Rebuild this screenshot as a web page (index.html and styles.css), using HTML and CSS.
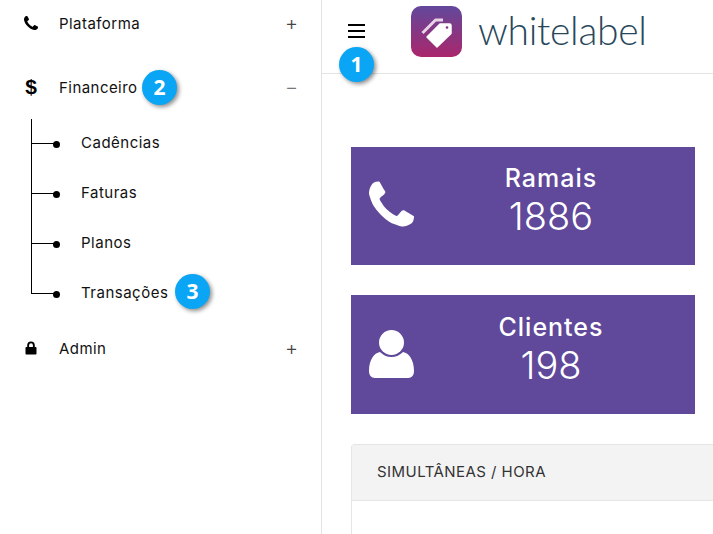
FILE: index.html
```html
<!DOCTYPE html>
<html lang="en">
<head>
  <meta charset="UTF-8" />
  <meta name="viewport" content="width=device-width, initial-scale=1.0"/>
  <title>Whitelabel</title>
  <link rel="stylesheet" href="styles.css">
</head>
<body>
  <div class="layout">
    <aside class="sidebar">
      <div class="nav-row first">
        <svg class="nav-icon" viewBox="192 128 1408 1408"><path d="M1600 1240q0 27-10 70.5t-21 68.5q-21 50-122 106-94 51-186 51-27 0-53-3.5t-57.5-12.5-47-14.5-55.5-20.5-49-18q-98-35-175-83-127-79-264-216t-216-264q-48-77-83-175-3-9-18-49t-20.5-55.5-14.5-47-12.5-57.5-3.5-53q0-92 51-186 56-101 106-122 25-11 68.5-21t70.5-10q14 0 21 3 18 6 53 76 11 19 30 54t35 63.5 31 53.5q3 4 17.5 25t21.5 35.5 7 28.5q0 20-28.5 50t-62 55-62 53-28.5 46q0 9 5 22.5t8.5 20.5 14 24 11.5 19q76 137 174 235t235 174q2 1 19 11.5t24 14 20.5 8.5 22.5 5q18 0 46-28.5t53-62 55-62 50-28.5q14 0 28.5 7t35.5 21.5 25 17.5q25 15 53.5 31t63.5 35 54 30q70 35 76 53 3 7 3 21z"/></svg>
        <span class="nav-label">Plataforma</span>
        <span class="nav-toggle">+</span>
      </div>
      <div class="nav-row open">
        <span class="nav-icon dollar">$</span>
        <span class="nav-label">Financeiro</span>
        <span class="badge badge-two">2</span>
        <span class="nav-toggle minus">&minus;</span>
      </div>
      <ul class="subnav">
        <li>Cadências</li>
        <li>Faturas</li>
        <li>Planos</li>
        <li>Transações<span class="badge badge-three">3</span></li>
      </ul>
      <div class="nav-row">
        <svg class="nav-icon" viewBox="0 0 12 14"><path d="M2.2 6V4.2a3.8 3.8 0 0 1 7.6 0V6h.9c.5 0 .8.3.8.8v5.900c0 .5-.3.8-.8.8H1.300c-.5 0-.8-.3-.8-.8V6.800c0-.5.3-.8.8-.8zm1.900 0h3.800V4.200a1.900 1.900 0 0 0-3.800 0z"/></svg>
        <span class="nav-label">Admin</span>
        <span class="nav-toggle">+</span>
      </div>
    </aside>

    <div class="content">
      <header class="topbar">
        <div class="burger"><span></span><span></span><span></span></div>
        <span class="badge badge-one">1</span>
        <svg class="logo-mark" viewBox="0 0 51 51">
          <defs>
            <linearGradient id="logoFill" x1="0" y1="0" x2="0" y2="1">
              <stop offset="0" stop-color="#62489b"/>
              <stop offset="1" stop-color="#aa266c"/>
            </linearGradient>
          </defs>
          <rect width="51" height="51" rx="10" fill="url(#logoFill)"/>
          <path d="M11.500 27 L24.500 14 H32" fill="none" stroke="#e9d3e6" stroke-width="3" stroke-linejoin="round"/>
          <path d="M29 18 H38.500 Q40 18 40 19.500 V27.500 L26 41 L16 31 Z" fill="#fff" stroke="#fff" stroke-width="1.500" stroke-linejoin="round"/>
          <circle cx="36" cy="21.500" r="1.300" fill="#8d3285"/>
        </svg>
        <span class="logo-text">whitelabel</span>
      </header>

      <main class="main">
        <section class="stat-card">
          <svg class="stat-icon" viewBox="192 128 1408 1408"><path d="M1600 1240q0 27-10 70.5t-21 68.5q-21 50-122 106-94 51-186 51-27 0-53-3.5t-57.5-12.5-47-14.5-55.5-20.5-49-18q-98-35-175-83-127-79-264-216t-216-264q-48-77-83-175-3-9-18-49t-20.5-55.5-14.5-47-12.5-57.5-3.5-53q0-92 51-186 56-101 106-122 25-11 68.5-21t70.5-10q14 0 21 3 18 6 53 76 11 19 30 54t35 63.5 31 53.5q3 4 17.5 25t21.5 35.5 7 28.5q0 20-28.5 50t-62 55-62 53-28.5 46q0 9 5 22.5t8.5 20.5 14 24 11.5 19q76 137 174 235t235 174q2 1 19 11.5t24 14 20.5 8.5 22.5 5q18 0 46-28.5t53-62 55-62 50-28.5q14 0 28.5 7t35.5 21.5 25 17.5q25 15 53.5 31t63.5 35 54 30q70 35 76 53 3 7 3 21z"/></svg>
          <div class="stat-text">
            <div class="stat-title">Ramais</div>
            <div class="stat-value">1886</div>
          </div>
        </section>

        <section class="stat-card">
          <svg class="stat-icon user-icon" viewBox="0 0 45 48"><path d="M0 41c0-11 5-18 11-19 3 3 7 5 11.500 5s8.500-2 11.500-5c6 1 11 8 11 19 0 4-2 7-6 7H6c-4 0-6-3-6-7z"/><circle cx="22.500" cy="12.500" r="12.500"/></svg>
          <div class="stat-text">
            <div class="stat-title">Clientes</div>
            <div class="stat-value">198</div>
          </div>
        </section>

        <section class="panel">
          <div class="panel-head">SIMULTÂNEAS / HORA</div>
        </section>
      </main>
    </div>
  </div>
</body>
</html>
```

FILE: styles.css
```css
html, body {
  margin: 0;
  height: 100%;
  overflow: hidden;
}
body {
  font-family: Inter, "Open Sans", sans-serif;
  background: white;
  color: #111;
}
.layout {
  display: flex;
  height: 534px;
  overflow: hidden;
}

/* sidebar */
.sidebar {
  width: 321px;
  flex: none;
  border-right: 1px solid #e4e4e4;
}
.nav-row {
  display: flex;
  align-items: center;
  height: 46px;
  padding: 0 24px 0 24px;
  font-size: 15px;
  position: relative;
}
.nav-row.first {
  margin-bottom: 18px;
}
.nav-icon {
  width: 14px;
  height: 14px;
  margin-right: 21px;
  flex: none;
  fill: #000;
  text-align: center;
}
.dollar {
  font-family: "Liberation Sans", sans-serif;
  font-weight: bold;
  font-size: 21px;
  line-height: 20px;
  height: 20px;
  color: #000;
}
.nav-label {
  flex: 1;
  letter-spacing: .45px;
}
.nav-toggle {
  font-size: 20px;
  font-weight: 300;
  width: 12px;
  text-align: center;
  color: #444;
}
.nav-toggle.minus {
  color: #777;
}
.subnav {
  list-style: none;
  margin: 8px 0 7px;
  padding: 0;
  position: relative;
  font-size: 15px;
}
.subnav::before {
  content: "";
  position: absolute;
  left: 31px;
  top: 1px;
  bottom: 24px;
  border-left: 1px solid #000;
}
.subnav li {
  height: 50px;
  line-height: 50px;
  padding-left: 81px;
  letter-spacing: .5px;
  position: relative;
}
.subnav li::before {
  content: "";
  position: absolute;
  left: 31px;
  top: 25px;
  width: 24px;
  border-top: 1px solid #000;
}
.subnav li::after {
  content: "";
  position: absolute;
  left: 53px;
  top: 23px;
  width: 7px;
  height: 7px;
  border-radius: 50%;
  background: #000;
}

/* numbered callouts */
.badge {
  position: absolute;
  width: 35px;
  height: 35px;
  border-radius: 50%;
  background: #0aa6f5;
  color: white;
  font-family: "Open Sans", sans-serif;
  font-weight: 700;
  font-size: 21px;
  line-height: 35px;
  letter-spacing: 0;
  text-align: center;
  box-shadow: 2px 2px 4px rgba(0,0,0,0.45);
}
.badge-one {
  left: 17px;
  top: 47px;
}
.badge-two {
  left: 142px;
  top: 6px;
}
.badge-three {
  left: 175px;
  top: 6px;
}

/* top bar */
.content {
  flex: 1;
  min-width: 0;
  position: relative;
}
.topbar {
  height: 73px;
  border-bottom: 1px solid #e4e4e4;
  display: flex;
  align-items: flex-start;
  position: relative;
}
.burger {
  width: 17px;
  margin: 24px 0 0 26px;
  display: flex;
  flex-direction: column;
  gap: 4px;
}
.burger span {
  height: 2px;
  background: #000;
}
.logo-mark {
  width: 51px;
  height: 51px;
  margin: 6px 0 0 46px;
  flex: none;
}
.logo-text {
  font-family: Lato, sans-serif;
  font-weight: 300;
  font-size: 39px;
  letter-spacing: -.3px;
  line-height: 50px;
  margin: 5px 0 0 16px;
  color: #28475b;
}

/* main area */
.main {
  padding: 73px 18px 0 29px;
}
.stat-card {
  display: flex;
  align-items: center;
  height: 118px;
  margin-bottom: 30px;
  padding: 0 7px 5px 18px;
  box-sizing: border-box;
  background: #60489a;
  color: white;
}
.stat-card + .stat-card {
  height: 119px;
}
.stat-icon {
  width: 45px;
  height: 48px;
  fill: white;
  flex: none;
}
.user-icon {
  margin-top: 4px;
}
.stat-text {
  flex: 1;
  text-align: center;
  margin-top: -4px;
}
.stat-title {
  font-size: 25px;
  font-weight: 500;
  letter-spacing: 1px;
  line-height: 28px;
}
.stat-value {
  font-size: 38px;
  font-weight: 300;
  line-height: 46px;
  margin-top: 1px;
}
.panel {
  margin-right: -40px;
  height: 90px;
  box-sizing: border-box;
  border: 1px solid #e5e5e5;
  border-bottom: none;
  border-radius: 4px 4px 0 0;
}
.panel-head {
  height: 55px;
  line-height: 54px;
  padding-left: 25px;
  background: #f3f3f3;
  border-bottom: 1px solid #e5e5e5;
  font-size: 15px;
  letter-spacing: .45px;
  color: #333;
}
```
